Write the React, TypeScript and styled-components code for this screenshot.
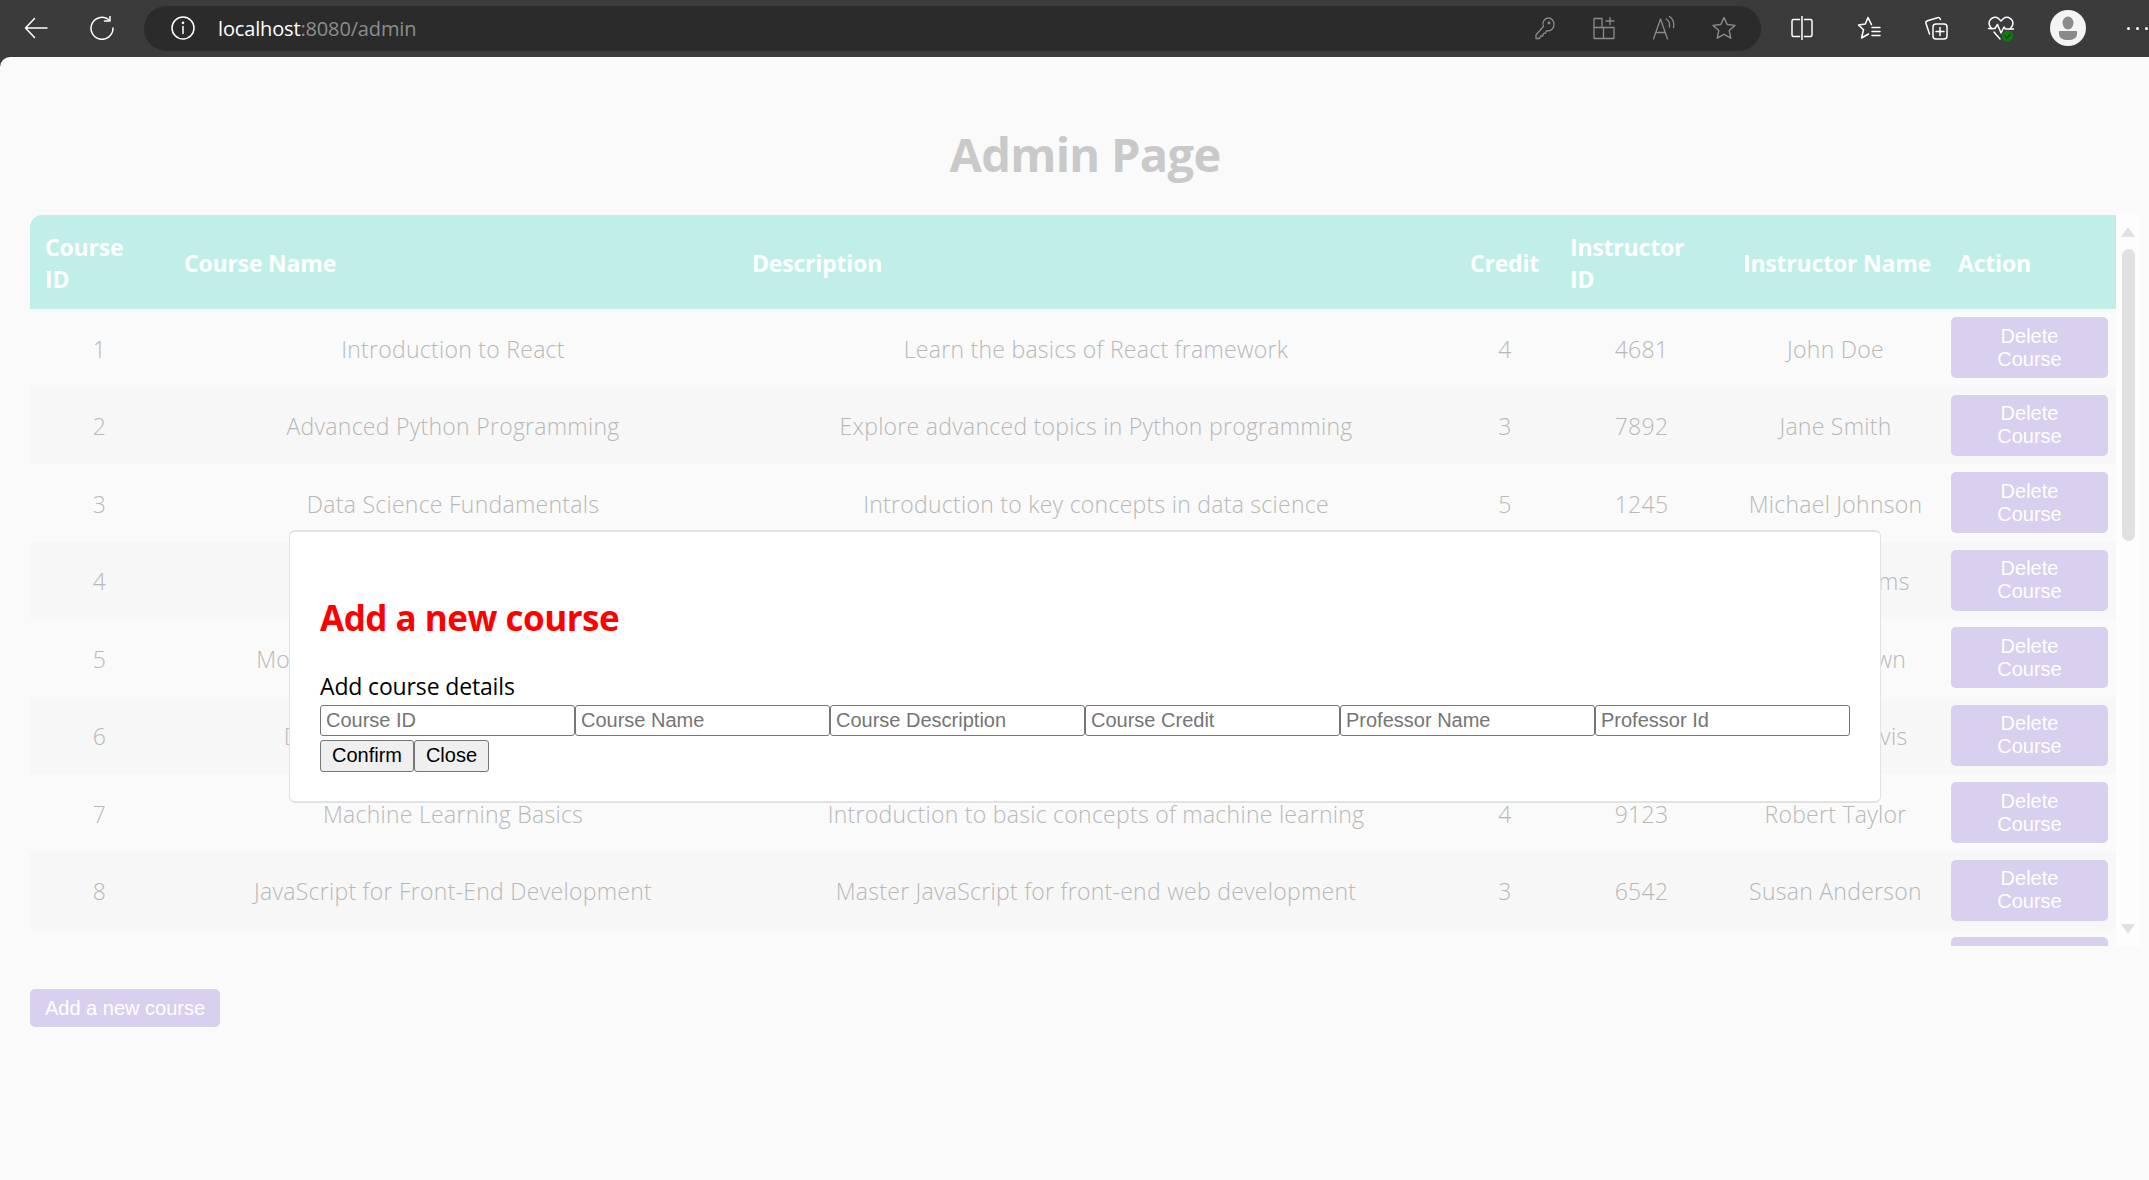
import React from "react";
import styled, { createGlobalStyle } from "styled-components";

const UI = `"Open Sans", "Noto Sans", sans-serif`;
const ARIAL = `"Liberation Sans", Arial, sans-serif`;

const Global = createGlobalStyle`
  html, body { margin: 0; padding: 0; background: #3b3b3b; }
  body { width: 2149px; height: 1180px; overflow: hidden; font-family: ${UI}; }
  * { box-sizing: border-box; }
`;

const Frame = styled.div`
  width: 2149px; height: 1180px; display: flex; flex-direction: column; position: relative; overflow: hidden;
`;
const Toolbar = styled.header`
  height: 57px; flex: none; display: flex; align-items: center; background: #3b3b3b; padding-bottom: 1px;
`;
const Slot = styled.span<{ $w: number; $c?: string }>`
  flex: none; width: ${p => p.$w}px; height: 30px; display: flex; align-items: center; justify-content: center;
  color: ${p => p.$c ?? "#fff"};
`;
const AddressBar = styled.div`
  margin: 0 8px 0 12px; width: 1617px; height: 45px; border-radius: 23px; background: #2b2b2b; color: #fff;
  display: flex; align-items: center; padding: 0 8px 0 27px; flex: none;
`;
const Url = styled.div`
  margin-left: 23px; flex: 1; font: 400 20px ${UI}; letter-spacing: -0.15px; color: #8d8d8d;
  b { font-weight: 400; color: #fff; }
`;
const Tools = styled.div`
  display: flex; flex: none;
`;
const Dots = styled.div`
  display: flex; gap: 6px; margin-left: 41px; flex: none;
  i { width: 3px; height: 3px; border-radius: 50%; background: #fff; display: block; }
`;
const Avatar = styled.div`
  width: 36px; height: 36px; border-radius: 50%; background: #f4f4f4; flex: none; margin-left: 17px;
  display: flex; align-items: center; justify-content: center;
`;

const Page = styled.main`
  flex: 1; background: #fafafa; border-top-left-radius: 10px; padding: 0 9px 0 30px; display: flex; flex-direction: column;
`;
const Title = styled.h1`
  margin: 69px 0 0; height: 89px; text-align: center; font: 700 47px/56px ${UI}; letter-spacing: -0.7px; color: #c9c9c9;
`;
const TableWrap = styled.section`
  height: 731px; display: flex; flex: none;
`;
const Viewport = styled.div`
  width: 2086px; flex: none; overflow: hidden;
`;
const Table = styled.table`
  width: 2086px; table-layout: fixed; border-collapse: collapse; font: 300 23px ${UI}; letter-spacing: 0.27px; color: #b8b8b8;
`;
const Col = styled.col<{ $w: number }>`
  width: ${p => p.$w}px;
`;
const HeadRow = styled.tr`
  height: 94px; background: #c0efe9;
`;
const Th = styled.th`
  text-align: left; padding: 2px 0 0 15px; color: #fff; font: 700 23px/32px ${UI}; letter-spacing: -0.2px; white-space: nowrap;
  &:first-child { border-top-left-radius: 12px; }
`;
const Row = styled.tr`
  height: 77.5px;
  &:nth-child(even) { background: #f7f7f7; }
`;
const Td = styled.td`
  text-align: center; padding: 2px 8px 0; vertical-align: middle;
`;
const ActionTd = styled.td`
  padding: 0 8px; vertical-align: middle;
`;
const SoftButton = styled.button`
  border: 0; background: #d9cfee; color: #fff; font: 400 20px/23px ${ARIAL}; border-radius: 5px;
`;
const DeleteButton = styled(SoftButton)`
  width: 157px; height: 61px; padding: 0 20px; display: block;
`;
const AddButton = styled(SoftButton)`
  width: 190px; height: 38px; margin-top: 43px; padding: 0; flex: none; align-self: flex-start;
`;
const Rail = styled.div`
  width: 24px; flex: none; background: #fdfdfd; display: flex; flex-direction: column; align-items: center; padding-top: 12px;
`;
const Arrow = styled.svg`
  flex: none; display: block;
`;
const Thumb = styled.div`
  width: 13px; height: 292px; margin-top: 12px; margin-bottom: 383px; border-radius: 7px; background: #e1e1e1;
`;

const Modal = styled.section`
  position: absolute; left: 289px; top: 530px; width: 1592px; height: 273px; background: #fff;
  border: 2px solid #e3e3e3; border-width: 2px 1px 2px 1px; border-radius: 6px; padding: 62px 0 0 30px;
`;
const ModalTitle = styled.h2`
  margin: 0; font: 700 35px/48px ${UI}; letter-spacing: -0.5px; color: #f00;
`;
const ModalText = styled.p`
  margin: 28px 0 0; font: 400 23px/32px ${UI}; letter-spacing: -0.15px; color: #000; height: 34px;
`;
const Fields = styled.div`
  display: flex; padding-top: 1px;
`;
const Field = styled.input`
  width: 255px; height: 31px; padding: 0 5px; font: 400 20px ${ARIAL}; color: #000; background: #fff;
  border: 1px solid #767676; border-radius: 3px; outline: 0;
  &::placeholder { color: #757575; opacity: 1; }
`;
const Actions = styled.div`
  display: flex; margin-top: 4px;
`;
const NativeButton = styled.button<{ $w: number }>`
  width: ${p => p.$w}px; height: 32px; padding: 0 0 2px; font: 400 20px ${ARIAL}; color: #000; background: #efefef;
  border: 1px solid #767676; border-radius: 3px;
`;

const I: React.FC<{ children: React.ReactNode; s?: number; w?: number }> = ({ children, s = 24, w = 1.5 }) => (
  <svg width={s} height={s} viewBox="0 0 24 24" fill="none" stroke="currentColor" strokeWidth={w} strokeLinecap="round" strokeLinejoin="round">
    {children}
  </svg>
);

const courses = [
  [1, "Introduction to React", "Learn the basics of React framework", 4, 4681, "John Doe"],
  [2, "Advanced Python Programming", "Explore advanced topics in Python programming", 3, 7892, "Jane Smith"],
  [3, "Data Science Fundamentals", "Introduction to key concepts in data science", 5, 1245, "Michael Johnson"],
  [4, "Web Development Basics", "Learn the basics of building websites", 3, 3367, "Emily Williams"],
  [5, "Mobile App Development with Flutter", "Build cross-platform mobile applications", 4, 5518, "Daniel Brown"],
  [6, "Database Management Systems", "Design and manage relational databases", 3, 2204, "Jennifer Davis"],
  [7, "Machine Learning Basics", "Introduction to basic concepts of machine learning", 4, 9123, "Robert Taylor"],
  [8, "JavaScript for Front-End Development", "Master JavaScript for front-end web development", 3, 6542, "Susan Anderson"],
  [9, "Cloud Computing Essentials", "Understand the core services of the cloud", 4, 8076, "Kevin Martin"],
];
const widths = [139, 568, 718, 100, 173, 215, 173];
const heads: React.ReactNode[] = [
  <>Course<br />ID</>, "Course Name", "Description", "Credit", <>Instructor<br />ID</>, "Instructor Name", "Action",
];
const fields = ["Course ID", "Course Name", "Course Description", "Course Credit", "Professor Name", "Professor Id"];

export default function App() {
  return (
    <Frame>
      <Global />
      <Toolbar>
        <Slot $w={72}><I><path d="M23 12H1.5M10.500 2.500 1.500 12l9 9.500" /></I></Slot>
        <Slot $w={60}><I><path d="M19.500 4.200A11 11 0 1 0 23 12" /><path d="M20 .5v4.500h-5.500" /></I></Slot>
        <AddressBar>
          <I><circle cx="12" cy="12" r="11" /><path d="M12 10.500v7" /><circle cx="12" cy="6.800" r=".6" fill="currentColor" /></I>
          <Url><b>localhost</b>:8080/admin</Url>
          <Tools>
            <Slot $w={59} $c="#8b8b8b"><I w={1.3}><path d="M9.500 11.500 3 19v3.500h3.500l1-2.500h2.200l.6-2.400 2.200-.6 1-2.200c4 .8 7.500-2 7.500-6.300 0-3.500-2.200-6.500-5.500-6.500-4 0-6.800 4-5 8.500Z" /><circle cx="16" cy="7" r=".8" /></I></Slot>
            <Slot $w={60} $c="#8b8b8b"><I w={1.3}><path d="M2 2.500h8v9H2zM2 11.500h20v11H2zM11.500 11.500v11" /><path d="M18 1.500v7M14 5h8" /></I></Slot>
            <Slot $w={60} $c="#8b8b8b"><I w={1.3}><path d="M1.500 23 8.500 3l7 20M4 16.500h9" /><path d="M14 3c3 1.500 4 4 3.500 8" /><path d="M17.500 .5c3.500 2.500 5 6 4 11" /></I></Slot>
            <Slot $w={59} $c="#8b8b8b"><I w={1.4}><path d="m12 1.500 3.200 7 7.800.9-5.800 5.100 1.600 7.700L12 18.300l-6.800 3.900 1.600-7.700L1 9.400l7.800-.9z" /></I></Slot>
          </Tools>
        </AddressBar>
        <Slot $w={66}><I><path d="M9.500 3.500H3.500a1.500 1.500 0 0 0-1.500 1.500v14a1.500 1.500 0 0 0 1.500 1.500h6M14.500 3.500h6a1.500 1.500 0 0 1 1.500 1.500v14a1.500 1.500 0 0 1-1.500 1.500h-6M12 .5v23" /></I></Slot>
        <Slot $w={67}><I><path d="M14.500 8.600 11 1.500 8.300 8 1.500 9l5 4.800L4.500 22l7-4" /><path d="M15 11.500h8M15 15.500h8M15 19.500h8" /></I></Slot>
        <Slot $w={67}><I><rect x="9" y="8" width="14" height="15" rx="3" /><path d="M16 11.500v8M12 15.500h8" /><path d="M5.500 18 2 7.500c-.4-1.300.2-2.400 1.500-2.800l10-3c1.300-.4 2.300.3 3 1.800" /></I></Slot>
        <Slot $w={64}>
          <svg width="28" height="28" viewBox="0 0 28 28" fill="none" stroke="currentColor" strokeWidth="1.500" strokeLinecap="round" strokeLinejoin="round">
            <path d="M5 15C2 12 1.500 9.500 2.500 7c1.500-3.500 6-5 9-2.500L14 7l2.500-2.500c3-2.500 7.500-1 9 2.500 1 2.500.5 5-2.500 8" />
            <path d="M1.500 14.500H8l2.500-4 3.500 8.500 3-6 1.500 2h8" />
            <path d="m7 18 6 7" />
            <circle cx="20.500" cy="22" r="5.500" fill="#107c10" stroke="none" />
            <path d="m18 22 2 2 3-3.500" stroke="#0c4a0c" />
          </svg>
        </Slot>
        <Avatar>
          <svg width="28" height="28" viewBox="0 0 28 28" fill="#8a8a8a"><ellipse cx="14" cy="9" rx="5.500" ry="6.500" /><path d="M5 17h18v3c0 4-4 6-9 6s-9-2-9-6z" /></svg>
        </Avatar>
        <Dots><i /><i /><i /></Dots>
      </Toolbar>

      <Page>
        <Title>Admin Page</Title>
        <TableWrap>
          <Viewport>
            <Table>
              <colgroup>{widths.map((w, i) => <Col key={i} $w={w} />)}</colgroup>
              <thead>
                <HeadRow>{heads.map((h, i) => <Th key={i}>{h}</Th>)}</HeadRow>
              </thead>
              <tbody>
                {courses.map(c => (
                  <Row key={c[0]}>
                    {c.map((v, i) => <Td key={i}>{v}</Td>)}
                    <ActionTd><DeleteButton>Delete Course</DeleteButton></ActionTd>
                  </Row>
                ))}
              </tbody>
            </Table>
          </Viewport>
          <Rail>
            <Arrow width="14" height="10" viewBox="0 0 14 10"><path d="M7 0 14 10H0z" fill="#e1e1e1" /></Arrow>
            <Thumb />
            <Arrow width="14" height="10" viewBox="0 0 14 10"><path d="M0 0h14L7 10z" fill="#e1e1e1" /></Arrow>
          </Rail>
        </TableWrap>
        <AddButton>Add a new course</AddButton>
      </Page>

      <Modal>
        <ModalTitle>Add a new course</ModalTitle>
        <ModalText>Add course details</ModalText>
        <Fields>{fields.map(f => <Field key={f} placeholder={f} />)}</Fields>
        <Actions>
          <NativeButton $w={94}>Confirm</NativeButton>
          <NativeButton $w={75}>Close</NativeButton>
        </Actions>
      </Modal>
    </Frame>
  );
}
